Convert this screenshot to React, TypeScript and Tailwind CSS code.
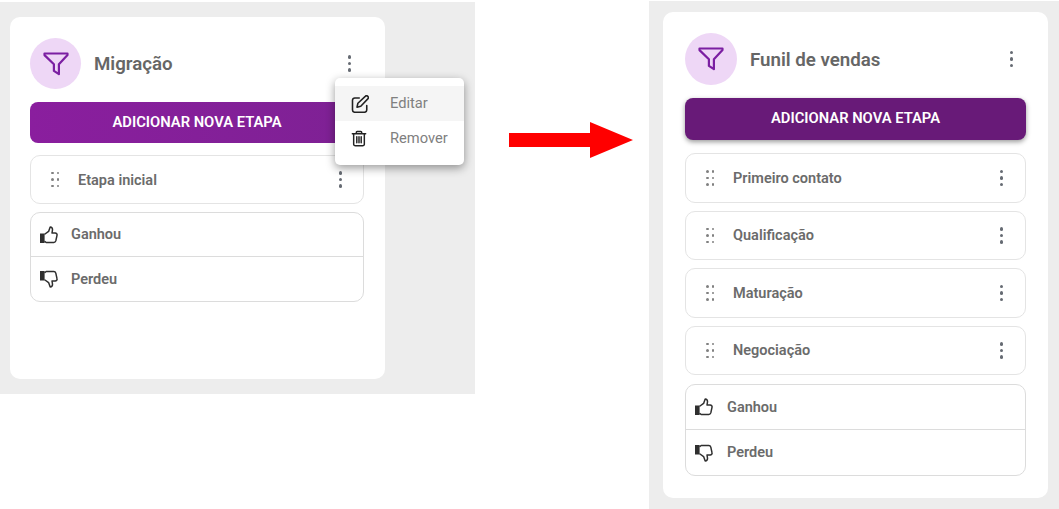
import React from "react";

const font = { fontFamily: "Roboto, sans-serif" };

function Funnel({ className }: { className: string }) {
  return (
    <svg viewBox="0 0 26 24" className={className} fill="none" stroke="#7b1fa2" strokeWidth="2.2" strokeLinejoin="round" strokeLinecap="round">
      <path d="M1.5 1.5h23v1.6l-8.6 9.2v9.9l-5-3.3v-6.6L1.5 3.1z" />
    </svg>
  );
}

function Kebab({ className = "" }: { className?: string }) {
  return (
    <span className={`flex flex-col gap-[3px] ${className}`}>
      <i className="block size-[3.5px] rounded-full bg-[#666b73]" />
      <i className="block size-[3.5px] rounded-full bg-[#666b73]" />
      <i className="block size-[3.5px] rounded-full bg-[#666b73]" />
    </span>
  );
}

function Drag() {
  return (
    <span className="grid w-[8px] grid-cols-[2.5px_2.5px] gap-x-[3px] gap-y-[4px]">
      {[0, 1, 2, 3, 4, 5].map((i) => (
        <i key={i} className="block size-[2.5px] rounded-full bg-[#808080]" />
      ))}
    </span>
  );
}

function Thumb({ down }: { down?: boolean }) {
  return (
    <svg width="18" height="18" viewBox="0 0 18 18" className={down ? "-scale-y-100" : ""} fill="none">
      <rect x="0" y="7.5" width="4.6" height="9.5" fill="#2f2f2f" />
      <path
        d="M5 8l3.6-2.6L10.2 1c1.6.2 2.4 1.2 2.3 2.8L12 7h3.2c1.3 0 2.1 1.1 1.8 2.3l-1.2 5.6c-.3 1-1 1.6-2 1.6H6.2L5 15.6"
        stroke="#2f2f2f"
        strokeWidth="1.5"
        strokeLinejoin="round"
        strokeLinecap="round"
      />
    </svg>
  );
}

function Stage({ label, h, pr }: { label: string; h: string; pr: string }) {
  return (
    <div className={`flex ${h} items-center rounded-[10px] border border-[#e4e4e4] bg-white pl-[20px] ${pr}`}>
      <Drag />
      <span className="ml-[19px] pt-[2px] text-[14.5px] font-semibold text-[#6b6b6b]">{label}</span>
      <Kebab className="ml-auto" />
    </div>
  );
}

function Outcomes({ h, gap, winText, lossText }: { h: string; gap: string; winText: string; lossText: string }) {
  return (
    <div className="rounded-[10px] border border-[#dcdcdc] bg-white">
      <div className={`flex ${h} items-center ${gap} border-b border-[#dcdcdc] pl-[9px]`}>
        <Thumb />
        <span className={`${winText} text-[14.5px] font-semibold text-[#6b6b6b]`}>Ganhou</span>
      </div>
      <div className={`flex ${h} items-center ${gap} pl-[9px]`}>
        <Thumb down />
        <span className={`${lossText} text-[14.5px] font-semibold text-[#6b6b6b]`}>Perdeu</span>
      </div>
    </div>
  );
}

function Menu() {
  return (
    <div className="absolute left-[335px] top-[76px] h-[87px] w-[129px] rounded-[5px] bg-white py-[8px] shadow-[0_3px_10px_rgba(0,0,0,0.4)]">
      <div className="flex h-[35px] items-center bg-[#f5f5f5] pl-[16px]">
        <svg width="18" height="18" viewBox="0 0 24 24" fill="none" stroke="#222" strokeWidth="2.1" strokeLinecap="round" strokeLinejoin="round">
          <path d="M11 4H5a3 3 0 0 0-3 3v13a3 3 0 0 0 3 3h13a3 3 0 0 0 3-3v-6" />
          <path d="M19 1.8a2.4 2.4 0 0 1 3.4 3.4L13 15l-5 1.2L9.2 11z" />
        </svg>
        <span className="ml-[21px] text-[14.7px] text-[#808080]">Editar</span>
      </div>
      <div className="flex h-[34px] items-center pl-[16px]">
        <svg width="16" height="17" viewBox="0 0 24 25" fill="none" stroke="#222" strokeWidth="2.2" strokeLinecap="round" strokeLinejoin="round">
          <path d="M2 5.5h20M8 5.5V3.2A1.2 1.2 0 0 1 9.2 2h5.6A1.2 1.2 0 0 1 16 3.2v2.3" />
          <path d="M4 5.5v15.5a2.5 2.5 0 0 0 2.5 2.5h11a2.5 2.5 0 0 0 2.5-2.5V5.5M8.7 10v9M12 10v9M15.3 10v9" />
        </svg>
        <span className="ml-[23px] text-[14.7px] text-[#808080]">Remover</span>
      </div>
    </div>
  );
}

export default function App() {
  return (
    <div className="flex h-[509px] w-[1059px] items-start overflow-hidden bg-white" style={font}>
      <div className="relative mt-[2px] h-[392px] w-[475px] shrink-0 bg-[#ededed] pl-[10px] pt-[15px]">
        <div className="h-[362px] w-[375px] rounded-[10px] bg-white pl-[20px] pr-[21px] pt-[21px]">
          <div className="flex items-center">
            <div className="flex size-[51px] items-center justify-center rounded-full bg-[#eed7f6]">
              <Funnel className="h-[24px] w-[26px]" />
            </div>
            <span className="ml-[13px] pt-[2px] text-[18.7px] font-semibold text-[#666666]">Migração</span>
            <Kebab className="ml-auto mr-[13px]" />
          </div>
          <div className="mt-[13px] flex h-[41px] items-center justify-center rounded-[8px] bg-gradient-to-r from-[#8a1e9e] to-[#7e2194] pb-[1px] text-[14.75px] font-semibold text-white">
            ADICIONAR NOVA ETAPA
          </div>
          <div className="mt-[12px]">
            <Stage label="Etapa inicial" h="h-[49px]" pr="pr-[21px]" />
          </div>
          <div className="mt-[8px]">
            <Outcomes h="h-[44px]" gap="gap-[13px]" winText="" lossText="pt-[1px]" />
          </div>
        </div>
        <Menu />
      </div>

      <div className="ml-[34px] mt-[122px] shrink-0">
        <svg width="124" height="36" viewBox="0 0 124 36" className="block">
          <path d="M0 11h81V0l43 18-43 18V25H0z" fill="#ff0000" />
        </svg>
      </div>

      <div className="ml-[16px] mt-[1px] h-[508px] w-[410px] shrink-0 bg-[#ededed] pl-[14px] pt-[11px]">
        <div className="h-[486px] w-[385px] rounded-[10px] bg-white px-[22px] pt-[21px]">
          <div className="flex items-center">
            <div className="flex size-[52px] items-center justify-center rounded-full bg-[#eed7f6]">
              <Funnel className="h-[24px] w-[26px]" />
            </div>
            <span className="ml-[13px] pt-[2px] text-[18.7px] font-semibold text-[#666666]">Funil de vendas</span>
            <Kebab className="ml-auto mr-[13px]" />
          </div>
          <div className="mt-[13px] flex h-[42px] items-center justify-center rounded-[8px] bg-[#681a78] pb-[1px] text-[14.75px] font-semibold text-white shadow-[0_2px_5px_rgba(0,0,0,0.4)]">
            ADICIONAR NOVA ETAPA
          </div>
          <div className="mt-[13px] flex flex-col gap-[8px]">
            <Stage label="Primeiro contato" h="h-[49.5px]" pr="pr-[22px]" />
            <Stage label="Qualificação" h="h-[49.5px]" pr="pr-[22px]" />
            <Stage label="Maturação" h="h-[49.5px]" pr="pr-[22px]" />
            <Stage label="Negociação" h="h-[49.5px]" pr="pr-[22px]" />
          </div>
          <div className="mt-[9px]">
            <Outcomes h="h-[45px]" gap="gap-[14px]" winText="pt-[1px]" lossText="" />
          </div>
        </div>
      </div>
    </div>
  );
}
